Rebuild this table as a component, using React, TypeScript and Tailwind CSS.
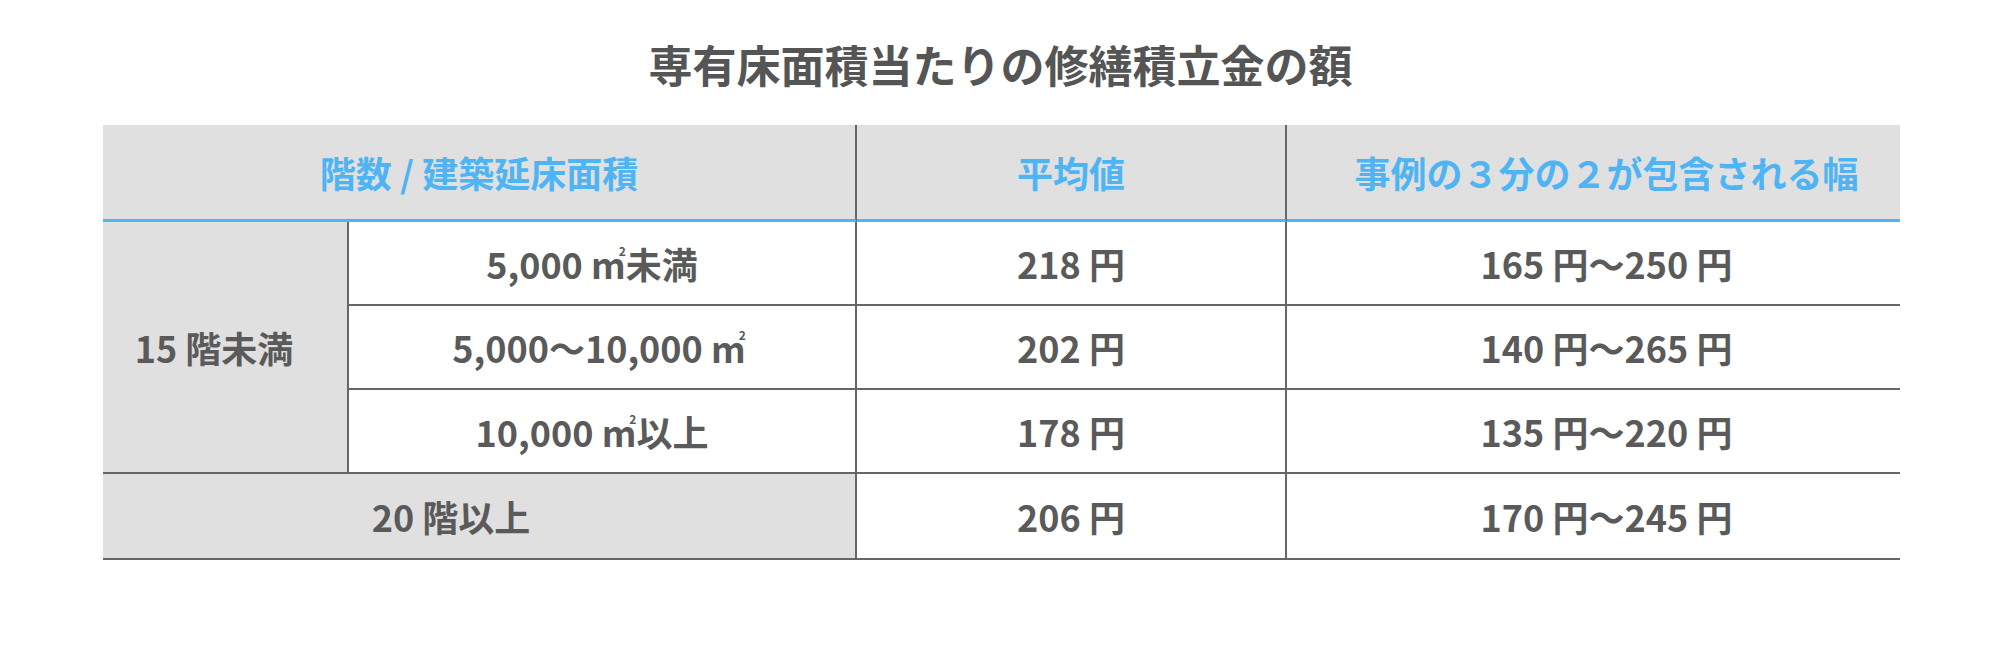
const font = { fontFamily: '"Noto Sans CJK JP", "Noto Sans", sans-serif' };

function Sq() {
  return (
    <span className="relative">
      m<span className="absolute top-[8px] right-0 text-[12px] leading-none">2</span>
    </span>
  );
}

const ROWS = [
  { area: <>5,000 <Sq />未満</>, avg: '218 円', range: '165 円〜250 円', pad: 'pr-[20px]' },
  { area: <>5,000〜10,000 <Sq /></>, avg: '202 円', range: '140 円〜265 円', pad: 'pr-[6px]' },
  { area: <>10,000 <Sq />以上</>, avg: '178 円', range: '135 円〜220 円', pad: 'pr-[20px]' },
];

export default function App() {
  return (
    <div className="w-[2001px] h-[661px] bg-white pt-[42px]" style={font}>
      <h1 className="text-center text-[44px] leading-[44px] h-[44px] font-bold text-[#555555]">
        専有床面積当たりの修繕積立金の額
      </h1>

      <div className="mt-[39px] ml-[103px] w-[1797px] grid grid-cols-[246px_508px_430px_613px] font-bold text-[36px] text-[#5a5a5a]">
        {/* header */}
        <div className="col-span-2 h-[97px] flex items-center justify-center bg-[#e0e0e0] border-b-[3px] border-b-[#4fb4f3] border-r-2 border-r-[#666666] text-[#4fb4f3]">
          階数 / 建築延床面積
        </div>
        <div className="h-[97px] flex items-center justify-center bg-[#e0e0e0] border-b-[3px] border-b-[#4fb4f3] border-r-2 border-r-[#666666] text-[#4fb4f3]">
          平均値
        </div>
        <div className="h-[97px] flex items-center justify-center bg-[#e0e0e0] border-b-[3px] border-b-[#4fb4f3] text-[#4fb4f3] pl-[26px]">
          事例の３分の２が包含される幅
        </div>

        {/* 15階未満 */}
        <div className="row-span-3 flex items-center justify-center bg-[#e0e0e0] border-b-2 border-r-2 border-[#666666] pr-[22px]">
          15 階未満
        </div>
        {ROWS.map((r, i) => (
          <div key={i} className="contents">
            <div className={`h-[84px] flex items-center justify-center border-b-2 border-r-2 border-[#666666] ${r.pad}`}>
              <span>{r.area}</span>
            </div>
            <div className="h-[84px] flex items-center justify-center border-b-2 border-r-2 border-[#666666]">
              {r.avg}
            </div>
            <div className="h-[84px] flex items-center justify-center border-b-2 border-[#666666] pl-[26px]">
              {r.range}
            </div>
          </div>
        ))}

        {/* 20階以上 */}
        <div className="col-span-2 h-[86px] flex items-center justify-center bg-[#e0e0e0] border-b-2 border-r-2 border-[#666666] pr-[56px]">
          20 階以上
        </div>
        <div className="h-[86px] flex items-center justify-center border-b-2 border-r-2 border-[#666666]">
          206 円
        </div>
        <div className="h-[86px] flex items-center justify-center border-b-2 border-[#666666] pl-[26px]">
          170 円〜245 円
        </div>
      </div>
    </div>
  );
}
